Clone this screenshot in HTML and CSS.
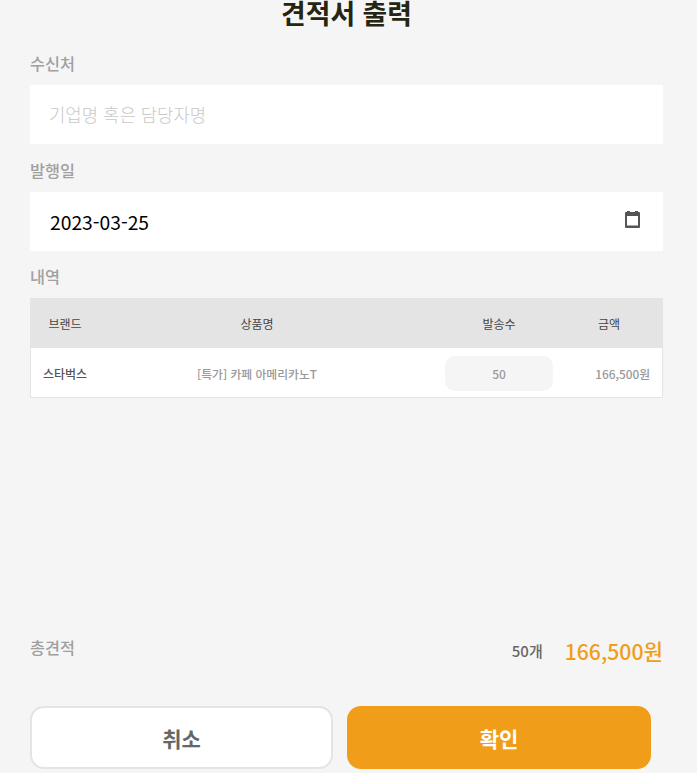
FILE: index.html
```html
<!DOCTYPE html>
<html lang="ko">
  <head>
    <meta charset="utf-8" />
    <title>견적서 출력</title>
    <link rel="stylesheet" href="styles.css">
  </head>
  <body>
    <h1 class="page-title">견적서 출력</h1>

    <div class="field field-first">
      <label class="field-label">수신처</label>
      <input class="field-input" type="text" placeholder="기업명 혹은 담당자명" />
    </div>

    <div class="field">
      <label class="field-label">발행일</label>
      <div class="field-input date-input">
        <span>2023-03-25</span>
        <svg class="calendar-icon" viewBox="0 0 15 17" width="15" height="17">
          <path fill="#555" d="M2 0h3v1h5V0h3v1h1a1 1 0 0 1 1 1v14a1 1 0 0 1-1 1H1a1 1 0 0 1-1-1V2a1 1 0 0 1 1-1h1z" />
          <rect x="2" y="5" width="11" height="9.5" fill="#fff" />
        </svg>
      </div>
    </div>

    <div class="field field-detail">
      <label class="field-label">내역</label>
      <div class="detail-table">
        <div class="detail-row detail-head">
          <span class="col-brand">브랜드</span>
          <span class="col-name">상품명</span>
          <span class="col-count">발송수</span>
          <span class="col-price">금액</span>
        </div>
        <div class="detail-row detail-body">
          <span class="col-brand brand-name">스타벅스</span>
          <span class="col-name product-name">[특가] 카페 아메리카노T</span>
          <span class="col-count"><span class="count-box">50</span></span>
          <span class="col-price price-value">166,500원</span>
        </div>
      </div>
    </div>

    <div class="summary">
      <span class="summary-label">총견적</span>
      <span class="summary-count">50개</span>
      <span class="summary-price">166,500원</span>
    </div>

    <div class="actions">
      <button class="btn btn-cancel">취소</button>
      <button class="btn btn-ok">확인</button>
    </div>
  </body>
</html>
```

FILE: styles.css
```css
* {
  box-sizing: border-box;
}

html, body {
  margin: 0;
  height: 773px;
  overflow: hidden;
}

body {
  padding: 0 34px 0 30px;
  background: #f5f5f5;
  font-family: "Noto Sans CJK KR", "Noto Sans", sans-serif;
}

.page-title {
  margin: 0;
  font-size: 26.8px;
  line-height: 26px;
  font-weight: 700;
  text-align: center;
  color: #252510;
}

.field-label {
  display: block;
  padding-top: 14px;
  height: 48px;
  font-size: 16.3px;
  line-height: 24px;
  font-weight: 500;
  color: #a0a0a0;
}

.field-first .field-label {
  padding-top: 25px;
  height: 59px;
}

.field-detail .field-label {
  height: 47px;
  padding-top: 13px;
}

.field-input {
  display: block;
  width: 100%;
  height: 59px;
  padding: 0 20px 2px 19px;
  border: 0;
  outline: none;
  background: #fff;
  font: inherit;
  font-size: 17.8px;
  color: #000;
}

.field-input::placeholder {
  color: #c8c8c8;
  font-weight: 300;
}

.date-input {
  display: flex;
  align-items: center;
  justify-content: space-between;
  padding: 0 23px 0 20px;
  font-size: 19.3px;
}

.calendar-icon {
  margin-top: -4px;
}

.detail-table {
  border: 1px solid #e4e4e4;
  border-top: 0;
  background: #fff;
  font-size: 12px;
}

.detail-row {
  display: flex;
  align-items: center;
  text-align: center;
}

.detail-head {
  height: 50px;
  margin: 0 -1px;
  background: #e4e4e4;
  color: #444;
}

.detail-body {
  height: 49px;
  margin: 0 -1px;
  padding-top: 1px;
  color: #999;
  font-weight: 500;
}

.col-brand {
  flex: none;
  width: 70px;
}

.col-name {
  flex: none;
  width: 314px;
}

.col-count {
  flex: none;
  width: 170px;
}

.col-price {
  flex: none;
  width: 50px;
}

.brand-name {
  color: #555;
}

.product-name {
  font-size: 11.8px;
}

.count-box {
  display: block;
  width: 108px;
  height: 35px;
  margin: 0 auto;
  border-radius: 10px;
  background: #f5f5f5;
  line-height: 35px;
}

.price-value {
  width: 79px;
  padding-right: 13px;
  font-size: 11.8px;
  text-align: right;
  white-space: nowrap;
}

.summary {
  display: flex;
  align-items: center;
  margin-top: 236px;
  height: 32px;
}

.summary-label {
  margin: 0 auto 6px 0;
  font-size: 16.3px;
  font-weight: 500;
  color: #a0a0a0;
}

.summary-count {
  margin-right: 22px;
  font-size: 15px;
  font-weight: 500;
  color: #666;
}

.summary-price {
  font-size: 21.2px;
  font-weight: 500;
  color: #f09e1a;
}

.actions {
  display: grid;
  grid-template-columns: 303px 304px;
  gap: 14px;
  margin-top: 40px;
}

.btn {
  height: 63px;
  padding: 0;
  border-radius: 14px;
  font: inherit;
  font-size: 21px;
  font-weight: 700;
}

.btn-cancel {
  border: 2px solid #e4e4e4;
  background: #fff;
  color: #666;
}

.btn-ok {
  border: 0;
  background: #f09e1a;
  color: #fff;
}
```
